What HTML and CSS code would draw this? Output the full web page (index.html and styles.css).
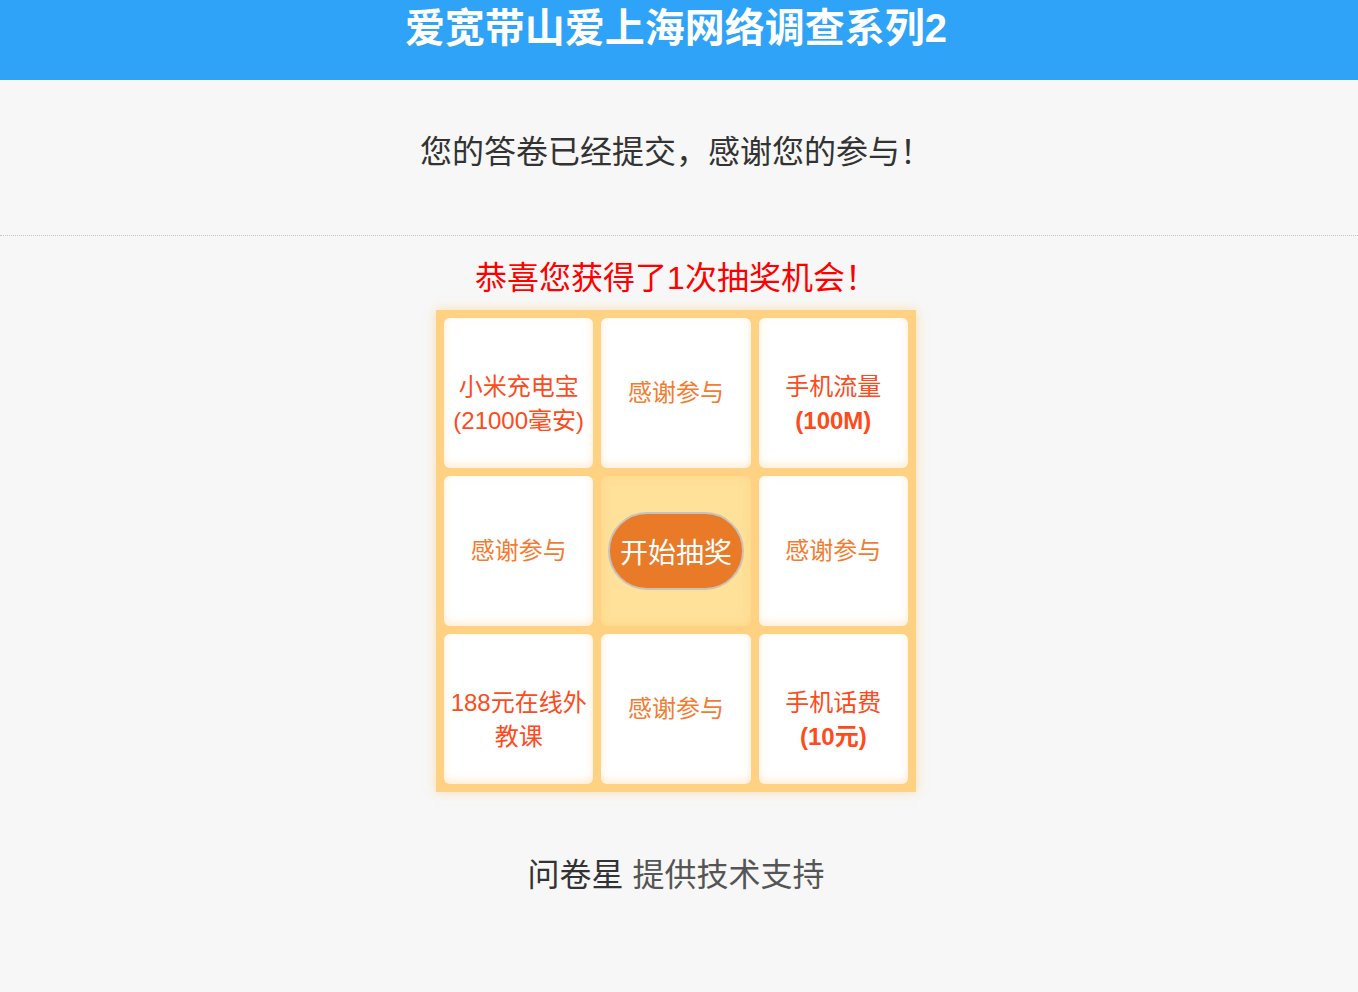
FILE: index.html
```html
<!DOCTYPE html>
<html lang="zh-CN">
<head>
<meta charset="UTF-8">
<meta name="viewport" content="width=device-width, initial-scale=1.0">
<title>爱宽带山爱上海网络调查系列2</title>
<link rel="stylesheet" href="styles.css">
</head>
<body>
<div class="header">
  <h1>爱宽带山爱上海网络调查系列2</h1>
</div>

<div class="done">您的答卷已经提交，感谢您的参与！</div>

<div class="lottery">
  <p class="chance">恭喜您获得了1次抽奖机会！</p>
  <div class="board">
    <div class="cell prize"><span>小米充电宝<br>(21000毫安)</span></div>
    <div class="cell thanks"><span>感谢参与</span></div>
    <div class="cell prize"><span>手机流量<br><b>(100M)</b></span></div>
    <div class="cell thanks"><span>感谢参与</span></div>
    <div class="cell center"><button class="start">开始抽奖</button></div>
    <div class="cell thanks"><span>感谢参与</span></div>
    <div class="cell prize"><span>188元在线外<br>教课</span></div>
    <div class="cell thanks"><span>感谢参与</span></div>
    <div class="cell prize"><span>手机话费<br><b>(10元)</b></span></div>
  </div>
</div>

<div class="footer"><span class="brand">问卷星</span> 提供技术支持</div>
</body>
</html>
```

FILE: styles.css
```css
body {
  margin: 0;
  padding: 0;
  background-color: #f7f7f7;
  font-family: "Liberation Sans", "Noto Sans CJK SC", sans-serif;
}

.header {
  background-color: #2ea3f8;
  height: 80px;
  text-align: center;
}

.header h1 {
  margin: 0;
  padding-right: 6px;
  color: #fff;
  font-size: 40px;
  line-height: 56px;
  font-weight: bold;
}

.done {
  padding: 52px 6px 63px 0;
  font-size: 32px;
  line-height: 40px;
  color: #333;
  text-align: center;
  border-bottom: 1px dotted #c4c4c4;
}

.lottery {
  display: flex;
  flex-direction: column;
  align-items: center;
  padding-right: 6px;
}

.chance {
  margin: 22px 0 12px;
  font-size: 32px;
  line-height: 40px;
  color: #ff0000;
}

.board {
  width: 480px;
  box-sizing: border-box;
  padding: 8px;
  display: grid;
  grid-template-columns: repeat(3, 1fr);
  grid-auto-rows: 150px;
  gap: 8px;
  background-color: #ffd283;
  box-shadow: 0 0 10px rgba(255, 205, 120, 0.6);
}

.cell {
  display: flex;
  align-items: center;
  justify-content: center;
  text-align: center;
  background-color: #fff;
  border-radius: 6px;
  font-size: 24px;
  line-height: 34px;
  box-shadow: inset 0 -3px 8px rgba(255, 200, 130, 0.35);
}

.prize {
  color: #ff4a1c;
  padding-top: 22px;
}

.thanks {
  color: #f47b30;
}

.center {
  background-color: #ffe199;
  box-shadow: inset 0 0 8px rgba(255, 200, 110, 0.5);
}

.start {
  width: 136px;
  height: 78px;
  border: 2px solid #c9c2bb;
  border-radius: 39px;
  background-color: #e87a28;
  color: #fff;
  font-family: inherit;
  font-size: 28px;
  padding: 0;
  cursor: pointer;
}

.footer {
  margin-top: 63px;
  padding-right: 6px;
  font-size: 32px;
  line-height: 40px;
  color: #555;
  text-align: center;
}

.brand {
  color: #333;
}
```
